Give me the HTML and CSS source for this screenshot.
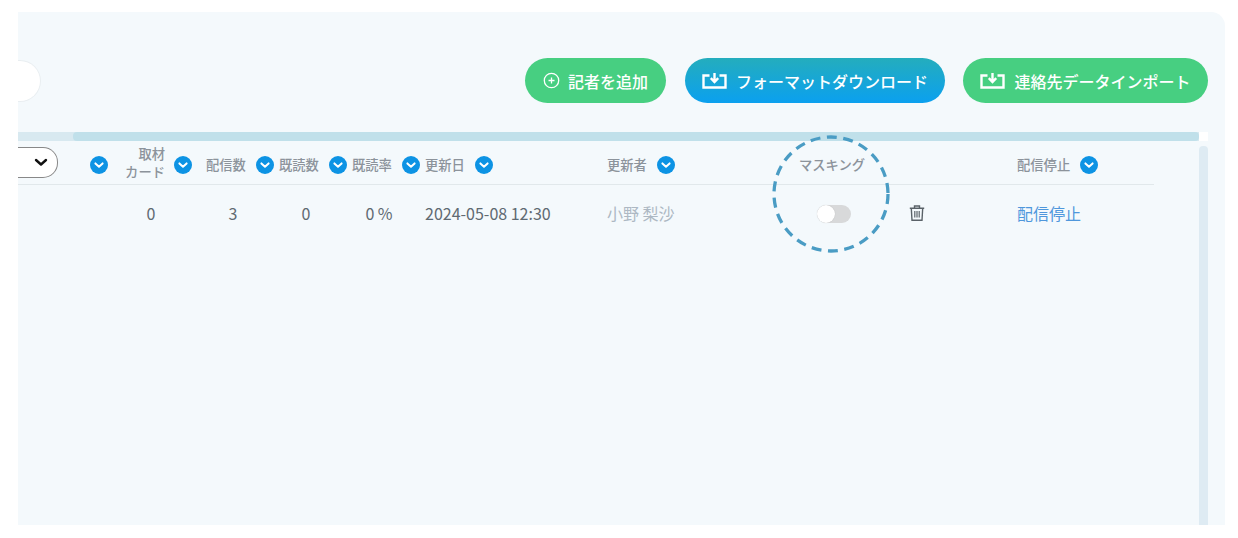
FILE: index.html
```html
<!DOCTYPE html>
<html lang="ja">
  <head>
    <meta charset="UTF-8" />
    <meta name="viewport" content="width=device-width, initial-scale=1.0" />
    <title>記者一覧</title>
    <link rel="stylesheet" href="styles.css">
  </head>
  <body>
    <svg class="icon-defs" width="0" height="0">
      <symbol id="chev" viewBox="0 0 18 18">
        <circle cx="9" cy="9" r="9" fill="#0d93e4" />
        <path d="M5.4 7.4 9 10.800l3.600-3.400" fill="none" stroke="#fff" stroke-width="2" stroke-linecap="round" stroke-linejoin="round" />
      </symbol>
      <symbol id="tray" viewBox="0 0 25 16">
        <path d="M7.500 2.500H1.500v12h22v-12h-6" fill="none" stroke="#fff" stroke-width="2.400" />
        <path d="M12.500 0v8M8.800 5.200l3.700 3.800 3.700-3.800" fill="none" stroke="#fff" stroke-width="2.400" />
      </symbol>
    </svg>
    <div class="panel">
      <div class="top">
        <div class="search"></div>
        <button class="pill pill-add">
          <svg class="add-icon" viewBox="0 0 17 17" width="17" height="17">
            <circle cx="8.500" cy="8.500" r="7.200" fill="none" stroke="#fff" stroke-width="1.300" />
            <path d="M8.500 5.500v6M5.500 8.500h6" stroke="#fff" stroke-width="1.300" />
          </svg>
          記者を追加
        </button>
        <button class="pill pill-blue">
          <svg class="tray-icon"><use href="#tray" /></svg>
          フォーマットダウンロード
        </button>
        <button class="pill pill-green">
          <svg class="tray-icon"><use href="#tray" /></svg>
          連絡先データインポート
        </button>
      </div>

      <div class="hscroll">
        <div class="hscroll-thumb"></div>
        <div class="corner"></div>
      </div>

      <div class="body">
        <div class="table">
          <div class="row head">
            <div class="cell"><div class="fake-select"><svg width="14" height="9" viewBox="0 0 14 9"><path d="M2 2l5 4.500L12 2" fill="none" stroke="#111" stroke-width="2.400" stroke-linecap="round" stroke-linejoin="round" /></svg></div></div>
            <div class="cell"><svg class="chev"><use href="#chev" /></svg></div>
            <div class="cell"><span class="two-line">取材<br>カード</span><svg class="chev"><use href="#chev" /></svg></div>
            <div class="cell"><span>配信数</span><svg class="chev"><use href="#chev" /></svg></div>
            <div class="cell"><span>既読数</span><svg class="chev"><use href="#chev" /></svg></div>
            <div class="cell"><span>既読率</span><svg class="chev"><use href="#chev" /></svg></div>
            <div class="cell"><span>更新日</span><svg class="chev"><use href="#chev" /></svg></div>
            <div class="cell"><span>更新者</span><svg class="chev"><use href="#chev" /></svg></div>
            <div class="cell"><span>マスキング</span></div>
            <div class="cell"><span>配信停止</span><svg class="chev"><use href="#chev" /></svg></div>
          </div>
          <div class="row item">
            <div class="cell"></div>
            <div class="cell"></div>
            <div class="cell"><span class="num">0</span></div>
            <div class="cell"><span class="num">3</span></div>
            <div class="cell"><span class="num">0</span></div>
            <div class="cell"><span class="num">0 %</span></div>
            <div class="cell">2024-05-08 12:30</div>
            <div class="cell name">小野 梨沙</div>
            <div class="cell mask-cell">
              <div class="toggle"><div class="knob"></div></div>
              <svg class="trash" width="16" height="16" viewBox="0 0 16 16">
                <path d="M.8 3.200h14.400M5.500 3V1h5v2M2.300 3.200l.7 12h10l.7-12" fill="none" stroke="#5a6268" stroke-width="1.400" />
                <path d="M5.800 6v6.500M8 6v6.500M10.200 6v6.500" stroke="#5a6268" stroke-width="1.200" />
              </svg>
            </div>
            <div class="cell"><a class="stop-link">配信停止</a></div>
          </div>
        </div>
        <div class="vscroll"></div>
      </div>

      <svg class="ring" width="122" height="122" viewBox="0 0 122 122">
        <circle cx="61" cy="61" r="57" fill="none" stroke="#4a9cc4" stroke-width="3.300" stroke-dasharray="10 6.500" />
      </svg>
    </div>
  </body>
</html>
```

FILE: styles.css
```css
* {
  box-sizing: border-box;
}

body {
  margin: 0;
  background-color: #fff;
  font-family: "Noto Sans CJK JP", "Noto Sans", sans-serif;
  color: #5f6a72;
}

.icon-defs {
  display: block;
  height: 0;
}

.panel {
  position: relative;
  width: 1207px;
  height: 513px;
  margin: 12px 0 0 18px;
  background-color: #f4f9fc;
  border-top-right-radius: 14px;
  overflow: hidden;
}

.top {
  display: flex;
  align-items: center;
  height: 120px;
  padding: 17px 17px 0 0;
}

.search {
  width: 23px;
  height: 42px;
  margin-right: auto;
  background-color: #fff;
  border: 1px solid #e9eef1;
  border-left: none;
  border-radius: 0 21px 21px 0;
}

.pill {
  display: flex;
  align-items: center;
  justify-content: center;
  height: 45px;
  border: none;
  border-radius: 23px;
  color: #fff;
  font-family: inherit;
  font-size: 16px;
  font-weight: 500;
  white-space: nowrap;
}

.pill-add {
  width: 141px;
  gap: 8px;
  margin-right: 19px;
  background-color: #47cf81;
}

.pill-blue {
  width: 260px;
  gap: 9px;
  margin-right: 18px;
  background: linear-gradient(#24adbd, #0ba0ef);
}

.pill-green {
  width: 245px;
  gap: 9px;
  background-color: #47cf81;
}

.tray-icon {
  width: 25px;
  height: 16px;
}

.hscroll {
  display: flex;
  height: 9px;
  margin-right: 17px;
  background-color: #d8e9f0;
}

.hscroll-thumb {
  width: 1126px;
  margin-left: 55px;
  background-color: #c0e0ea;
  border-radius: 4px;
}

.corner {
  width: 9px;
  margin-left: auto;
  background-color: #fff;
}

.body {
  display: flex;
  height: 384px;
}

.table {
  width: 1136px;
}

.row {
  display: grid;
  grid-template-columns: 72px 34px 82px 73px 73px 73px 182px 192px 218px 137px;
  align-items: center;
}

.head {
  height: 44px;
  padding-top: 4px;
  border-bottom: 1px solid #e1e8eb;
  font-size: 13.3px;
  font-weight: 500;
  color: #8c939b;
}

.item {
  height: 56px;
  font-size: 16px;
}

.cell {
  display: flex;
  align-items: center;
  white-space: nowrap;
}

.chev {
  width: 18px;
  height: 18px;
  margin-left: 10px;
  flex: none;
}

.cell:nth-child(2) .chev {
  margin-left: 0;
}

.two-line {
  width: 41px;
  text-align: right;
  line-height: 18px;
  margin-right: -1px;
  margin-top: -4px;
}

.fake-select {
  display: flex;
  align-items: center;
  justify-content: flex-end;
  width: 40px;
  height: 31px;
  margin-top: -4px;
  padding-right: 9px;
  background-color: #fff;
  border: 1.5px solid #888;
  border-left: none;
  border-radius: 0 15px 15px 0;
}

.num {
  width: 54px;
  text-align: center;
}

.name {
  color: #adb8c3;
}

.mask-cell {
  padding-left: 18px;
}

.toggle {
  width: 34px;
  height: 18px;
  margin-top: 1px;
  background-color: #d8d9da;
  border-radius: 9px;
}

.knob {
  width: 18px;
  height: 18px;
  background-color: #fff;
  border-radius: 50%;
  box-shadow: 0 0 1px rgba(0, 0, 0, 0.2);
}

.trash {
  margin-left: 58px;
}

.stop-link {
  color: #4f97dc;
}

.vscroll {
  width: 9px;
  margin-left: 45px;
  margin-top: 5px;
  background-color: #deebf3;
  border-radius: 4px 4px 0 0;
}

.ring {
  position: absolute;
  left: 752px;
  top: 121px;
}
```
